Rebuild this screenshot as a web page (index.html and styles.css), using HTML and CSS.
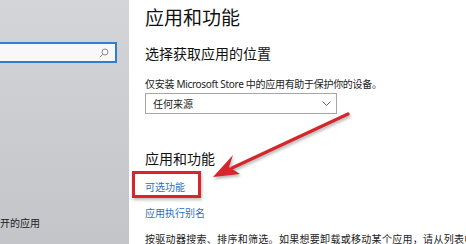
FILE: index.html
```html
<!DOCTYPE html>
<html lang="zh-CN">
<head>
    <meta charset="UTF-8">
    <meta name="viewport" content="width=device-width, initial-scale=1.0">
    <title>应用和功能</title>
    <link rel="stylesheet" href="styles.css">
</head>
<body>
    <div class="window">
        <div class="sidebar">
            <div class="search-box">
                <svg class="search-icon" width="10" height="10" viewBox="0 0 10 10">
                    <circle cx="6" cy="4" r="3" fill="none" stroke="#8a8a8a" stroke-width="1"/>
                    <line x1="3.8" y1="6.2" x2="0.8" y2="9.2" stroke="#8a8a8a" stroke-width="1"/>
                </svg>
            </div>
            <div class="sidebar-item">开的应用</div>
        </div>

        <div class="content">
            <div class="page-title">应用和功能</div>
            <div class="subtitle">选择获取应用的位置</div>
            <p class="desc">仅安装 Microsoft Store 中的应用有助于保护你的设备。</p>
            <div class="select">
                <span>任何来源</span>
                <svg width="9" height="5" viewBox="0 0 9 5">
                    <polyline points="0.5,0.5 4.5,4.5 8.5,0.5" fill="none" stroke="#666" stroke-width="1"/>
                </svg>
            </div>

            <div class="subtitle section">应用和功能</div>
            <a class="link highlight">可选功能</a>
            <a class="link">应用执行别名</a>
            <p class="desc bottom">按驱动器搜索、排序和筛选。如果想要卸载或移动某个应用，请从列表中</p>
        </div>

        <!-- annotation arrow -->
        <svg class="arrow" width="466" height="244" viewBox="0 0 466 244">
            <line x1="348" y1="114" x2="232" y2="168" stroke="#d6262b" stroke-width="3.2" stroke-linecap="round"/>
            <polygon points="213,177 233,155 229,167 240,174" fill="#d6262b"/>
        </svg>
    </div>
</body>
</html>
```

FILE: styles.css
```css
body {
    margin: 0;
    font-family: "Noto Sans", "Noto Sans CJK SC", sans-serif;
    background: #ffffff;
}

.window {
    position: relative;
    display: flex;
    width: 466px;
    height: 244px;
    overflow: hidden;
}

.sidebar {
    width: 129px;
    flex-shrink: 0;
    display: flex;
    flex-direction: column;
    padding: 42px 0 14px;
    box-sizing: border-box;
    background: linear-gradient(180deg, #d3d5d8 0%, #c9cbcf 60%, #c3c5c9 100%);
}

.search-box {
    width: 109px;
    height: 17px;
    background: #f8f8f8;
    border: 2px solid #2f7fd1;
    border-left: none;
    display: flex;
    justify-content: flex-end;
    align-items: center;
    padding-right: 6px;
}

.sidebar-item {
    margin-top: auto;
    font-size: 10px;
    line-height: 14px;
    color: #222;
}

.content {
    flex: 1;
    min-width: 0;
    padding: 5px 0 0 16px;
    color: #111;
}

.page-title {
    font-size: 19px;
    line-height: 26px;
}

.subtitle {
    margin-top: 13px;
    font-size: 14px;
    line-height: 20px;
}

.subtitle.section {
    margin-top: 35px;
}

.desc {
    margin: 13px 0 0;
    font-size: 10px;
    line-height: 14px;
    letter-spacing: -0.3px;
    color: #222;
    white-space: nowrap;
}

.desc.bottom {
    margin-top: 12px;
    letter-spacing: 0.3px;
}

.select {
    margin-top: 2px;
    width: 192px;
    height: 21px;
    box-sizing: border-box;
    border: 1px solid #a6a6a6;
    display: flex;
    align-items: center;
    justify-content: space-between;
    padding: 0 5px 0 7px;
    font-size: 10px;
    color: #222;
}

.link {
    display: block;
    width: max-content;
    font-size: 10px;
    line-height: 14px;
    color: #2a70c0;
    margin-top: 12px;
}

.highlight {
    position: relative;
    margin-top: 11px;
}

.highlight::after {
    content: "";
    position: absolute;
    left: -13px;
    top: -9px;
    width: 63px;
    height: 21px;
    border: 3.5px solid #d6262b;
    box-shadow: 1px 2px 3px rgba(0, 0, 0, 0.25);
}

.arrow {
    position: absolute;
    left: 0;
    top: 0;
    filter: drop-shadow(1px 2px 1.5px rgba(0, 0, 0, 0.3));
}
```
